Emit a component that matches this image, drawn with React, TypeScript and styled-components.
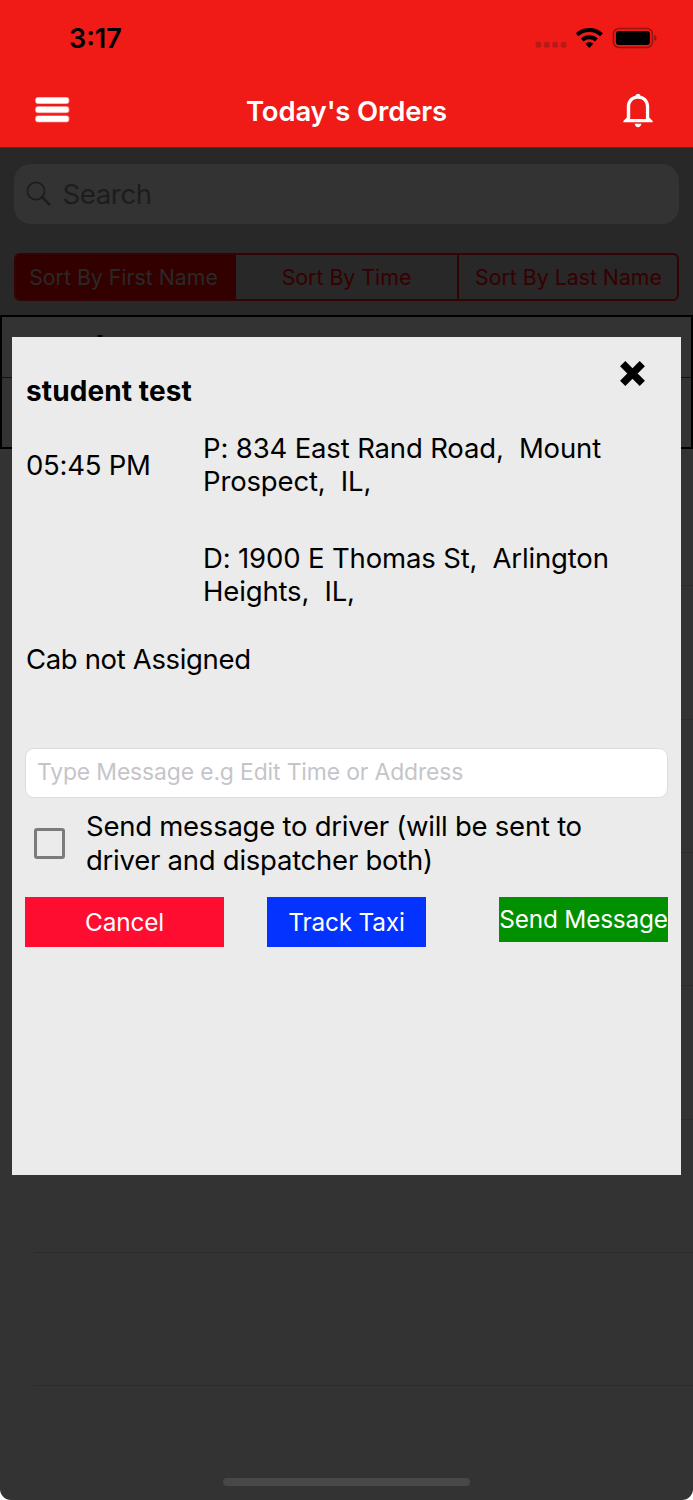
import React from "react";
import styled, { createGlobalStyle } from "styled-components";

const Global = createGlobalStyle`
  * { box-sizing: border-box; }
  body { margin: 0; background: #fff; font-family: Inter, "Liberation Sans", sans-serif; }
  button, input { font: inherit; border: 0; padding: 0; }
`;

const Screen = styled.div`
  position: relative;
  display: flex;
  flex-direction: column;
  width: 693px;
  height: 1500px;
  overflow: hidden;
  background: #333;
  border-radius: 0 0 11px 11px;
`;

const Header = styled.header`
  height: 148px;
  flex: none;
  background: #f01a17;
  border-bottom: 1px solid #6e2220;
`;

const StatusBar = styled.div`
  height: 76px;
  padding: 0 36px 0 69px;
  display: flex;
  align-items: center;
  justify-content: space-between;
`;

const Clock = styled.span`
  font-size: 27px;
  font-weight: 600;
`;

const NavBar = styled.div`
  height: 68px;
  padding: 0 39px 0 34px;
  display: grid;
  grid-template-columns: 36px 1fr 32px;
  align-items: center;
`;

const NavTitle = styled.h1`
  margin: 0;
  padding: 1px 0 0 1px;
  text-align: center;
  font-size: 27.5px;
  font-weight: 600;
  letter-spacing: -0.15px;
  color: #fff;
`;

const Filters = styled.section`
  height: 167px;
  flex: none;
  padding: 16px 14px 0;
  background: #282828;
`;

const SearchBox = styled.div`
  height: 60px;
  padding: 0 0 1px 12px;
  display: flex;
  align-items: center;
  gap: 10.5px;
  border-radius: 17px;
  background: #333;
  color: #1d1d1d;
  font-size: 27.7px;
  letter-spacing: -0.45px;
`;

const Segments = styled.div`
  display: grid;
  grid-template-columns: 220px 221px 1fr;
  height: 48px;
  margin-top: 29px;
  border: 2px solid #340304;
  border-radius: 6px;
  overflow: hidden;
`;

const Segment = styled.button<{ $active?: boolean }>`
  padding-bottom: 1px;
  font-size: 21.3px;
  white-space: nowrap;
  color: ${(p) => (p.$active ? "#292929" : "#370000")};
  background: ${(p) => (p.$active ? "#330000" : "transparent")};
  &:first-child { padding-right: 5px; }
  &:last-child {
    padding-left: 1px;
    border-left: 2px solid #340304;
  }
`;

const OrderCell = styled.div`
  height: 134px;
  flex: none;
  border: 2px solid #000;
`;

const OrderName = styled.div`
  height: 61px;
  padding: 11px 0 0 34px;
  border-bottom: 1px solid #111;
  font-size: 31px;
  font-weight: 700;
  letter-spacing: 0.2px;
`;

const EmptyRow = styled.div<{ $first?: boolean }>`
  height: ${(p) => (p.$first ? 137.4 : 133.3)}px;
  flex: none;
  margin-left: 34px;
  border-bottom: 1px solid #2c2c2c;
`;

const HomeIndicator = styled.div`
  position: absolute;
  left: 223px;
  bottom: 14px;
  width: 247px;
  height: 8px;
  border-radius: 4px;
  background: #484848;
`;

const Dialog = styled.div`
  position: absolute;
  left: 12px;
  top: 336.5px;
  width: 669px;
  height: 838.5px;
  padding: 0 13px;
  background: #ebebeb;
  color: #000;
  font-size: 27.5px;
  letter-spacing: -0.15px;
  line-height: 33.5px;
`;

const DialogHead = styled.div`
  display: flex;
  justify-content: space-between;
  height: 95px;
  padding: 23.5px 22px 0 1px;
`;

const DialogTitle = styled.h2`
  margin: 14.5px 0 0;
  font-size: 28px;
  font-weight: 700;
  letter-spacing: 0.1px;
`;

const Trip = styled.div`
  display: grid;
  grid-template-columns: 177px 1fr;
  padding-left: 1px;
`;

const Time = styled.div`
  padding-top: 17px;
  letter-spacing: -0.25px;
`;

const Address = styled.div`
  white-space: pre;
  height: 110px;
`;

const CabStatus = styled.div`
  padding: 0 0 0 1px;
  margin-top: -9px;
  height: 105.5px;
  letter-spacing: -0.35px;
`;

const MessageInput = styled.input`
  display: block;
  width: 643px;
  height: 50px;
  padding: 0 11px 2px;
  border: 1px solid #dcdcdc;
  border-radius: 9px;
  background: #fff;
  font-size: 22.9px;
  letter-spacing: -0.13px;
  &::placeholder { color: #c5c5c9; opacity: 1; }
`;

const DriverOption = styled.label`
  display: flex;
  height: 99px;
  padding: 12px 0 0 9px;
  gap: 21px;
  white-space: pre;
  letter-spacing: -0.25px;
`;

const CheckBox = styled.span`
  width: 31px;
  height: 31px;
  margin-top: 18px;
  border: 3px solid #7b7b7b;
  border-radius: 3px;
`;

const Actions = styled.div`
  display: flex;
  align-items: flex-start;
  justify-content: space-between;
`;

const Action = styled.button<{ $color: string; $width: number; $height?: number; $shift?: number }>`
  width: ${(p) => p.$width}px;
  height: ${(p) => p.$height ?? 50}px;
  margin-right: ${(p) => p.$shift ?? 0}px;
  padding-top: ${(p) => (p.$height ? 0 : 1)}px;
  background: ${(p) => p.$color};
  color: #fff;
  font-size: 24.4px;
  letter-spacing: -0.2px;
  white-space: nowrap;
`;

const StatusIcons = () => (
  <svg width="122" height="24" viewBox="0 0 122 24">
    <g fill="#b71b19">
      {[0.6, 9, 17.4, 25.8].map((x) => (
        <rect key={x} x={x} y="15.8" width="5.6" height="6" rx="1.8" />
      ))}
    </g>
    <g fill="none" stroke="#000" strokeWidth="4">
      <path d="M42 8.8a18 18 0 0 1 24.6 0" />
      <path d="M47.2 14a10.7 10.7 0 0 1 14.2 0" />
    </g>
    <path d="M50.3 17.7a6.2 6.2 0 0 1 8 0l-4 4.2z" />
    <rect x="78.4" y="2.5" width="39" height="19" rx="5.5" fill="none" stroke="#951512" strokeWidth="1.5" />
    <rect x="80.9" y="5" width="34" height="14" rx="3" />
    <path d="M119.2 8.8q5 3 0 6.4z" fill="#951512" />
  </svg>
);

const MenuIcon = () => (
  <svg width="36" height="28" viewBox="0 0 36 28" fill="#fff">
    {[1.6, 10.8, 20].map((y) => (
      <g key={y}>
        <rect x="1" y={y - 0.7} width="34.5" height="7.2" rx="3" opacity=".4" />
        <rect x="1.7" y={y} width="33" height="5.8" rx="2.5" />
      </g>
    ))}
  </svg>
);

const BellIcon = () => (
  <svg width="32" height="36" viewBox="0 0 32 36" fill="#fff">
    <path d="M13.4 3.7a2.7 2.7 0 0 1 5.2 0c5.6 1.2 8.6 5.5 8.6 11v10.8l3.5 3.5v1.2H1.4V29l3.4-3.5V14.7c0-5.5 3-9.8 8.6-11zM16 6.8c-4.9 0-7.8 3.3-7.8 8v12.1h15.7V14.8c0-4.7-3-8-7.9-8z" fillRule="evenodd" />
    <path d="M12.7 31.8h6.7q-.7 3.4-3.4 3.4t-3.3-3.4z" />
  </svg>
);

const SearchIcon = () => (
  <svg width="26" height="26" viewBox="0 0 26 26" fill="none" stroke="#1d1d1d">
    <circle cx="10" cy="10" r="8.6" strokeWidth="1.7" />
    <path d="M16 16l7.4 7.4" strokeWidth="2.6" strokeLinecap="round" />
  </svg>
);

const CloseIcon = () => (
  <svg width="27" height="27" viewBox="0 0 27 27" stroke="#000" strokeWidth="7.4">
    <path d="M3.7 3.7l19.6 19.6M23.3 3.7L3.7 23.3" />
  </svg>
);

export default function App() {
  return (
    <>
      <Global />
      <Screen>
        <Header>
          <StatusBar>
            <Clock>3:17</Clock>
            <StatusIcons />
          </StatusBar>
          <NavBar>
            <MenuIcon />
            <NavTitle>Today's Orders</NavTitle>
            <BellIcon />
          </NavBar>
        </Header>
        <Filters>
          <SearchBox>
            <SearchIcon />
            Search
          </SearchBox>
          <Segments>
            <Segment $active>Sort By First Name</Segment>
            <Segment>Sort By Time</Segment>
            <Segment>Sort By Last Name</Segment>
          </Segments>
        </Filters>
        <OrderCell>
          <OrderName>student test</OrderName>
        </OrderCell>
        {[0, 1, 2, 3, 4, 5, 6].map((row) => (
          <EmptyRow key={row} $first={row === 0} />
        ))}
        <HomeIndicator />
        <Dialog role="dialog">
          <DialogHead>
            <DialogTitle>student test</DialogTitle>
            <CloseIcon />
          </DialogHead>
          <Trip>
            <Time>05:45 PM</Time>
            <div>
              <Address>{"P: 834 East Rand Road,  Mount\nProspect,  IL,"}</Address>
              <Address>{"D: 1900 E Thomas St,  Arlington\nHeights,  IL,"}</Address>
            </div>
          </Trip>
          <CabStatus>Cab not Assigned</CabStatus>
          <MessageInput placeholder="Type Message e.g Edit Time or Address" />
          <DriverOption>
            <CheckBox />
            <span>{"Send message to driver (will be sent to\ndriver and dispatcher both)"}</span>
          </DriverOption>
          <Actions>
            <Action $color="#ff0d30" $width={199}>Cancel</Action>
            <Action $color="#0432ff" $width={159} $shift={30}>Track Taxi</Action>
            <Action $color="#009000" $width={169} $height={45}>Send Message</Action>
          </Actions>
        </Dialog>
      </Screen>
    </>
  );
}
